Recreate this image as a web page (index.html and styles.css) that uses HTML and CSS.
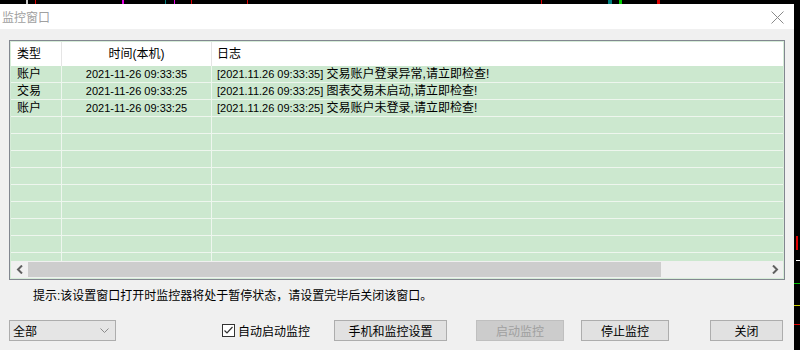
FILE: index.html
```html
<!DOCTYPE html>
<html lang="zh-CN">
<head>
  <meta charset="UTF-8">
  <title>监控窗口</title>
  <link rel="stylesheet" href="styles.css">
</head>
<body>
  <div class="chart-top">
    <span class="mark m1"></span>
    <span class="mark m2"></span>
    <span class="mark m3"></span>
    <span class="mark m4"></span>
    <span class="mark m5"></span>
    <span class="mark m6"></span>
    <span class="mark m7"></span>
    <span class="mark m8"></span>
    <span class="mark m9"></span>
    <span class="mark m10"></span>
    <span class="mark m11"></span>
  </div>

  <div class="wrap">
    <div class="dialog">
      <div class="titlebar">
        <div class="title">监控窗口</div>
        <svg class="close" width="13" height="13" viewBox="0 0 13 13">
          <path d="M0.5 0.5 L12.5 12.5 M12.5 0.5 L0.5 12.5" stroke="#8a8a8a" stroke-width="1" fill="none"/>
        </svg>
      </div>

      <div class="content">
        <div class="list">
          <div class="list-head">
            <div class="cell c-type">类型</div>
            <div class="cell c-time">时间(本机)</div>
            <div class="cell c-log">日志</div>
          </div>
          <div class="list-body">
            <div class="row">
              <div class="cell c-type">账户</div>
              <div class="cell c-time num">2021-11-26 09:33:35</div>
              <div class="cell c-log"><span class="num">[2021.11.26 09:33:35]</span> 交易账户登录异常,请立即检查!</div>
            </div>
            <div class="row">
              <div class="cell c-type">交易</div>
              <div class="cell c-time num">2021-11-26 09:33:25</div>
              <div class="cell c-log"><span class="num">[2021.11.26 09:33:25]</span> 图表交易未启动,请立即检查!</div>
            </div>
            <div class="row">
              <div class="cell c-type">账户</div>
              <div class="cell c-time num">2021-11-26 09:33:25</div>
              <div class="cell c-log"><span class="num">[2021.11.26 09:33:25]</span> 交易账户未登录,请立即检查!</div>
            </div>
            <div class="row"><div class="cell"></div><div class="cell"></div><div class="cell"></div></div>
            <div class="row"><div class="cell"></div><div class="cell"></div><div class="cell"></div></div>
            <div class="row"><div class="cell"></div><div class="cell"></div><div class="cell"></div></div>
            <div class="row"><div class="cell"></div><div class="cell"></div><div class="cell"></div></div>
            <div class="row"><div class="cell"></div><div class="cell"></div><div class="cell"></div></div>
            <div class="row"><div class="cell"></div><div class="cell"></div><div class="cell"></div></div>
            <div class="row"><div class="cell"></div><div class="cell"></div><div class="cell"></div></div>
            <div class="row"><div class="cell"></div><div class="cell"></div><div class="cell"></div></div>
            <div class="row"><div class="cell"></div><div class="cell"></div><div class="cell"></div></div>
          </div>
          <div class="hscroll">
            <div class="sb-btn">
              <svg width="8" height="9" viewBox="0 0 8 9"><path d="M6 0.5 L2 4.5 L6 8.5" stroke="#606060" stroke-width="2" fill="none"/></svg>
            </div>
            <div class="sb-track"><div class="sb-thumb"></div></div>
            <div class="sb-btn">
              <svg width="8" height="9" viewBox="0 0 8 9"><path d="M2 0.5 L6 4.5 L2 8.5" stroke="#606060" stroke-width="2" fill="none"/></svg>
            </div>
          </div>
        </div>

        <div class="hint">提示:该设置窗口打开时监控器将处于暂停状态，请设置完毕后关闭该窗口。</div>

        <div class="actions">
          <div class="combo">
            <span>全部</span>
            <svg width="9" height="5" viewBox="0 0 9 5"><path d="M0.5 0.5 L4.5 4.5 L8.5 0.5" stroke="#8a8a8a" stroke-width="1" fill="none"/></svg>
          </div>
          <label class="check">
            <span class="box">
              <svg width="11" height="11" viewBox="0 0 11 11"><path d="M1.5 5.5 L4 8 L9.5 2" stroke="#333" stroke-width="1.2" fill="none"/></svg>
            </span>
            自动启动监控
          </label>
          <button class="btn btn-phone">手机和监控设置</button>
          <button class="btn btn-start" disabled>启动监控</button>
          <button class="btn btn-stop">停止监控</button>
          <button class="btn btn-close">关闭</button>
        </div>
      </div>
    </div>
    <div class="chart-side">
      <span class="mark s1"></span>
      <span class="mark s2"></span>
      <span class="mark s3"></span>
      <span class="mark s4"></span>
      <span class="mark s5"></span>
    </div>
  </div>
</body>
</html>
```

FILE: styles.css
```css
body {
  margin: 0;
  background-color: #000000;
  font-family: "Liberation Sans", "Noto Sans CJK SC", sans-serif;
  font-size: 12px;
  color: #000;
  width: 800px;
  height: 350px;
  overflow: hidden;
}

.chart-top {
  height: 4px;
  position: relative;
}

.mark {
  position: absolute;
  display: block;
}

.m1 { left: 26px; top: 0; width: 2px; height: 4px; background: #cccccc; }
.m2 { left: 35px; top: 0; width: 1px; height: 4px; background: #e00000; }
.m3 { left: 122px; top: 0; width: 2px; height: 4px; background: #e000e0; }
.m4 { left: 165px; top: 0; width: 1px; height: 4px; background: #008080; }
.m5 { left: 174px; top: 0; width: 1px; height: 4px; background: #e000e0; }
.m6 { left: 191px; top: 0; width: 1px; height: 4px; background: #e00000; }
.m7 { left: 247px; top: 0; width: 1px; height: 4px; background: #e00000; }
.m8 { left: 541px; top: 0; width: 1px; height: 4px; background: #e00000; }
.m9 { left: 608px; top: 0; width: 4px; height: 4px; background: #008080; }
.m10 { left: 619px; top: 0; width: 3px; height: 4px; background: #00d000; }
.m11 { left: 657px; top: 0; width: 3px; height: 4px; background: #e00000; }

.wrap {
  display: flex;
}

.dialog {
  width: 794px;
  height: 346px;
  background-color: #f0f0f0;
}

.chart-side {
  width: 6px;
  height: 346px;
  position: relative;
}

.s1 { left: 2px; top: 232px; width: 2px; height: 14px; background: #e00000; }
.s2 { left: 2px; top: 256px; width: 4px; height: 1px; background: #ffffff; }
.s3 { left: 0; top: 279px; width: 6px; height: 1px; background: #00c000; }
.s4 { left: 0; top: 301px; width: 6px; height: 1px; background: #d0d000; }
.s5 { left: 0; top: 320px; width: 6px; height: 1px; background: #e00000; }

.titlebar {
  height: 25px;
  background-color: #ffffff;
  display: flex;
  align-items: center;
  justify-content: space-between;
}

.title {
  padding-left: 2px;
  color: #a0a0a0;
  font-size: 12px;
  margin-top: -1px;
}

.close {
  margin-right: 10px;
  margin-top: 1px;
}

.content {
  padding: 11px 0 0 9px;
}

.list {
  width: 776px;
  height: 240px;
  box-sizing: border-box;
  border: 1px solid #828790;
  padding: 1px;
  background-color: #d6ecd8;
  display: flex;
  flex-direction: column;
}

.list-head {
  height: 24px;
  background-color: #ffffff;
  display: grid;
  grid-template-columns: 51px 150px 1fr;
}

.list-head .cell {
  border-right: 1px solid #e5e5e5;
  line-height: 24px;
  font-size: 12px;
}

.list-body {
  height: 195px;
  overflow: hidden;
  background-color: #cce8cf;
}

.row {
  height: 17px;
  box-sizing: border-box;
  border-bottom: 1px solid #eef6ee;
  display: grid;
  grid-template-columns: 51px 150px 1fr;
}

.row .cell {
  border-right: 1px solid #eef6ee;
  line-height: 17px;
  white-space: nowrap;
}

.cell:last-child {
  border-right: none;
}

.c-type {
  padding-left: 6px;
}

.c-time {
  text-align: center;
}

.c-log {
  padding-left: 5px;
}

.num {
  font-size: 11px;
}

.hscroll {
  height: 17px;
  display: flex;
  background-color: #f0f0f0;
}

.sb-btn {
  width: 17px;
  display: flex;
  align-items: center;
  justify-content: center;
}

.sb-track {
  flex: 1;
  padding: 1px 0;
}

.sb-thumb {
  width: 633px;
  height: 15px;
  background-color: #cdcdcd;
}

.hint {
  margin-top: 8px;
  padding-left: 24px;
  line-height: 16px;
  color: #000;
}

.actions {
  margin-top: 16px;
  display: flex;
  align-items: center;
  height: 21px;
}

.combo {
  width: 107px;
  height: 21px;
  box-sizing: border-box;
  border: 1px solid #adadad;
  background-color: #e5e5e5;
  display: flex;
  align-items: center;
  justify-content: space-between;
  padding: 0 6px 0 3px;
}

.check {
  margin-left: 106px;
  display: flex;
  align-items: center;
}

.box {
  width: 13px;
  height: 13px;
  box-sizing: border-box;
  border: 1px solid #333333;
  background-color: #ffffff;
  display: flex;
  align-items: center;
  justify-content: center;
  margin-right: 3px;
}

.btn {
  height: 21px;
  box-sizing: border-box;
  border: 1px solid #adadad;
  background-color: #e1e1e1;
  font-family: "Liberation Sans", "Noto Sans CJK SC", sans-serif;
  font-size: 12px;
  color: #000;
  padding: 0;
}

.btn:disabled {
  background-color: #cccccc;
  border-color: #bfbfbf;
  color: #a0a0a0;
}

.btn-phone {
  margin-left: 24px;
  width: 113px;
}

.btn-start {
  margin-left: 29px;
  width: 88px;
}

.btn-stop {
  margin-left: 17px;
  width: 88px;
}

.btn-close {
  margin-left: 41px;
  width: 73px;
}
```
